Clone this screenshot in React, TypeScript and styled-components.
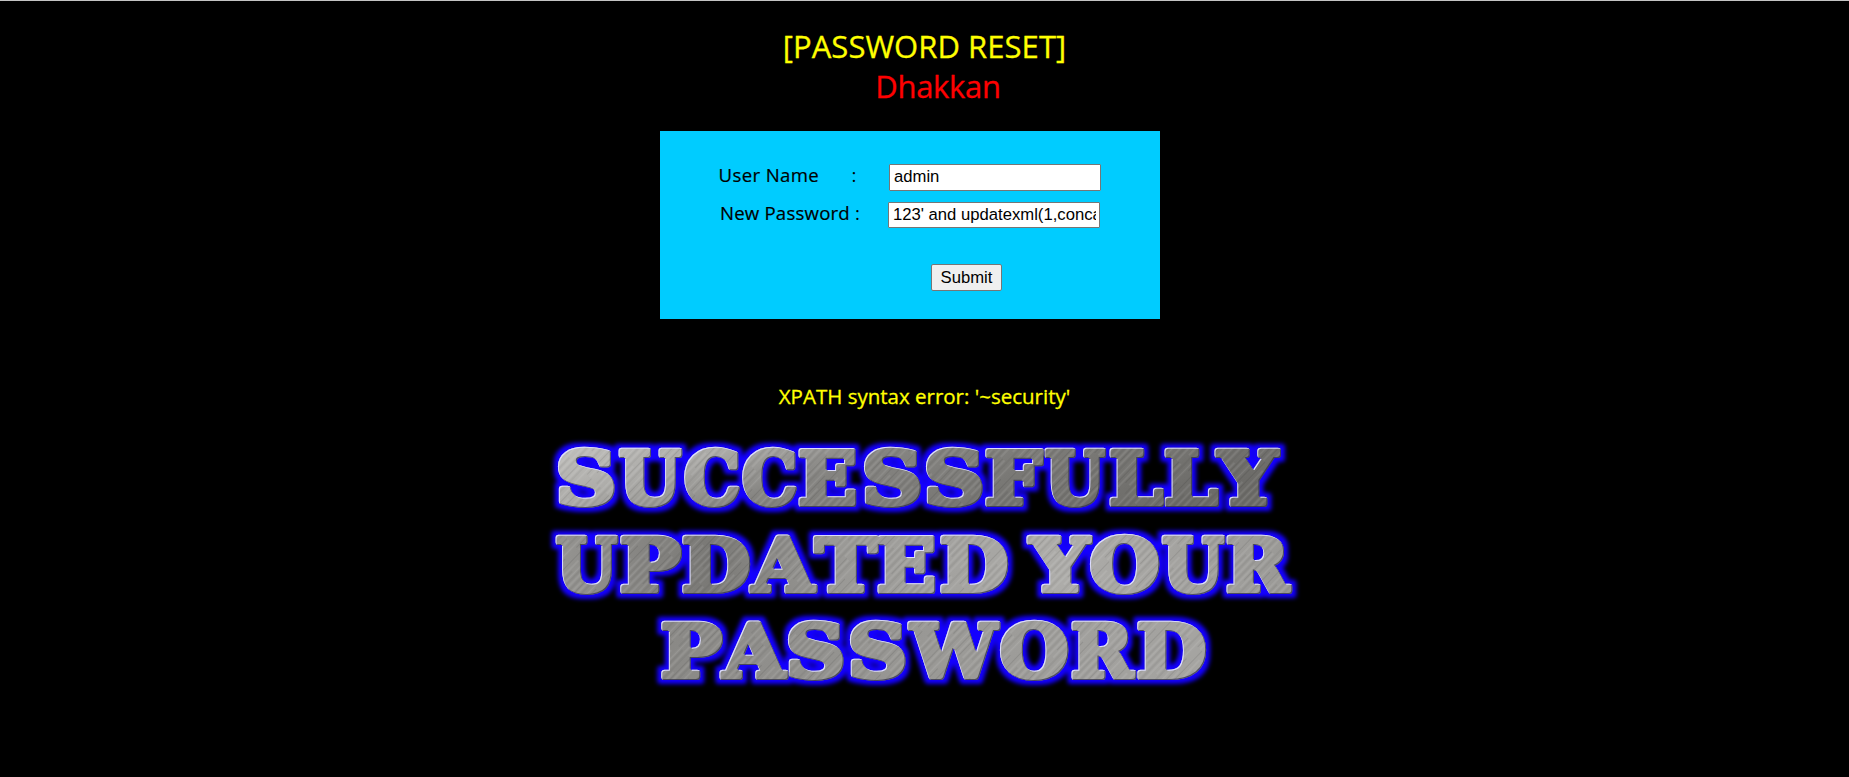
import React, { useMemo } from "react";
import styled, { createGlobalStyle } from "styled-components";

const GlobalStyle = createGlobalStyle`
  * { box-sizing: border-box; }
  body { margin: 0; background: #000; overflow: hidden; }
`;

const Page = styled.main`
  display: flex;
  flex-direction: column;
  align-items: center;
  width: 100%;
  height: 777px;
  padding-top: 25px;
  border-top: 1px solid #c4c4c4;
  background: #000;
  font-family: "Open Sans", "Noto Sans", sans-serif;
`;

const Line = styled.div<{ $size: number; $color: string; $spacing?: number; $indent?: number }>`
  height: 40px;
  line-height: 40px;
  white-space: nowrap;
  font-size: ${(p) => p.$size}px;
  color: ${(p) => p.$color};
  letter-spacing: ${(p) => p.$spacing ?? 0}px;
  margin-left: ${(p) => p.$indent ?? 0}px;
  -webkit-text-stroke: 0.3px ${(p) => p.$color};
`;

const Panel = styled.form`
  display: flex;
  flex-direction: column;
  width: 500px;
  height: 188px;
  margin: 25px 29px 0 0;
  padding: 33px 0 0 58px;
  background: #00ccff;
`;

const Row = styled.label<{ $shift?: number; $gap: number }>`
  display: flex;
  height: 27px;
  margin-bottom: ${(p) => p.$gap}px;
  padding-left: ${(p) => p.$shift ?? 0}px;
  font-size: 18.6px;
  line-height: 22px;
  color: #000;
`;

const Caption = styled.span<{ $width: number; $spacing: number }>`
  width: ${(p) => p.$width}px;
  white-space: nowrap;
  letter-spacing: ${(p) => p.$spacing}px;
  -webkit-text-stroke: 0.2px #000;
`;

const Colon = styled.span<{ $width: number }>`
  width: ${(p) => p.$width}px;
`;

const Field = styled.input<{ $height: number }>`
  width: 212px;
  height: ${(p) => p.$height}px;
  padding: 0 3px 1px 4px;
  border: 1px solid #767676;
  border-radius: 1px;
  background: #fff;
  color: #000;
  font: 16.67px "Liberation Sans", Arial, sans-serif;
  outline: none;
`;

const Submit = styled.button`
  width: 71px;
  height: 27px;
  margin-left: 213px;
  padding: 0;
  border: 1px solid #767676;
  border-radius: 2px;
  background: #efefef;
  color: #000;
  font: 16.67px "Liberation Sans", Arial, sans-serif;
`;

const Message = styled(Line)`
  margin-top: 57px;
`;

const Banner = styled.svg`
  display: block;
  flex: none;
  width: 769px;
  height: 270px;
  margin-top: 13px;
`;

const SIZE = 72;
const STROKE = 5.8;

const Lettering = styled.text`
  font-family: "DejaVu Serif", serif;
  font-weight: 700;
  font-size: ${SIZE}px;
  fill: url(#metal);
  stroke: url(#metal);
  stroke-width: ${STROKE}px;
  stroke-linejoin: round;
`;

type Span = [number, number];

// Left and right edge of every letter, one pair per character.
const lines: { text: string; y: number; edges: Span[] }[] = [
  {
    text: "SUCCESSFULLY",
    y: 75,
    edges: [[17, 75], [78, 143], [144, 200], [202, 257], [258, 317], [323, 381], [385, 443], [445, 505], [504, 567], [569, 625], [624, 680], [674, 742]],
  },
  {
    text: "UPDATED YOUR",
    y: 161.8,
    edges: [[15, 79], [80, 143], [142, 211], [208, 278], [272, 339], [337, 396], [400, 469], [469, 486], [486, 554], [550, 620], [621, 686], [686, 753]],
  },
  {
    text: "PASSWORD",
    y: 248,
    edges: [[121, 184], [179, 249], [247, 304], [309, 366], [367, 461], [460, 529], [531, 597], [597, 667]],
  },
];

// Stretches each glyph so that its inked part fills the span given for it.
function fitGlyphs() {
  const ctx = document.createElement("canvas").getContext("2d")!;
  ctx.font = `700 ${SIZE}px "DejaVu Serif", serif`;
  return lines.map((line) => ({
    ...line,
    glyphs: [...line.text].map((char, i) => {
      const [left, right] = line.edges[i];
      if (char === " ") return { char: "\u00a0", x: left, length: right - left };
      const m = ctx.measureText(char);
      const ink = m.actualBoundingBoxLeft + m.actualBoundingBoxRight + STROKE;
      const scale = (right - left) / ink;
      return {
        char,
        x: left + scale * (m.actualBoundingBoxLeft + STROKE / 2),
        length: m.width * scale,
      };
    }),
  }));
}

function SuccessBanner() {
  const fitted = useMemo(fitGlyphs, []);
  return (
    <Banner viewBox="0 0 769 270">
      <defs>
        <linearGradient id="sheen" x1="0" y1="0" x2="1" y2="0.35">
          <stop offset="0" stopColor="#c8c7c4" />
          <stop offset="0.28" stopColor="#acaba8" />
          <stop offset="0.48" stopColor="#858481" />
          <stop offset="0.75" stopColor="#777673" />
          <stop offset="1" stopColor="#6c6b68" />
        </linearGradient>
        <linearGradient id="sheen2" x1="0" x2="1" y1="0" y2="0">
          <stop offset="0" stopColor="#989794" />
          <stop offset="0.22" stopColor="#7a7976" />
          <stop offset="0.38" stopColor="#999895" />
          <stop offset="0.68" stopColor="#adaca9" />
          <stop offset="1" stopColor="#989794" />
        </linearGradient>
        <linearGradient id="sheen3" x1="0" x2="1" y1="0" y2="0">
          <stop offset="0.15" stopColor="#898885" />
          <stop offset="0.55" stopColor="#9b9a97" />
          <stop offset="0.85" stopColor="#a5a4a1" />
        </linearGradient>
        <pattern id="brush" width="60" height="43" patternUnits="userSpaceOnUse" patternTransform="rotate(-46)">
          <path d="M0 1H60M0 7H38M12 12H60M0 19.5H60M0 26H30M9 33H52M0 38.5H60" stroke="#fff" strokeOpacity=".1" strokeWidth="1.3" />
          <path d="M0 4H60M20 9.5H60M0 15H60M0 22.5H44M8 28.5H60M0 36H40M14 41H60" stroke="#000" strokeOpacity=".09" strokeWidth="1.2" />
        </pattern>
        <pattern id="metal" width="769" height="270" patternUnits="userSpaceOnUse">
          <rect width="769" height="92" fill="url(#sheen)" />
          <rect y="91" width="769" height="87" fill="url(#sheen2)" />
          <rect y="177" width="769" height="93" fill="url(#sheen3)" />
          <rect width="769" height="270" fill="url(#brush)" />
        </pattern>
        <filter id="bevel" x="0" y="0" width="769" height="270" filterUnits="userSpaceOnUse" colorInterpolationFilters="sRGB">
          <feMorphology in="SourceAlpha" operator="dilate" radius="4" result="wide" />
          <feGaussianBlur in="wide" stdDeviation="2" result="halo" />
          <feFlood floodColor="#1400ff" />
          <feComposite in2="halo" operator="in" result="glow" />
          <feOffset in="SourceAlpha" dx="1" dy="1" result="se" />
          <feOffset in="SourceAlpha" dx="-1" dy="-1" result="nw" />
          <feFlood floodColor="#dcdcff" />
          <feComposite in2="SourceAlpha" operator="in" />
          <feComposite in2="se" operator="out" result="light" />
          <feFlood floodColor="#30304c" floodOpacity=".75" />
          <feComposite in2="SourceAlpha" operator="in" />
          <feComposite in2="nw" operator="out" result="dark" />
          <feMerge>
            <feMergeNode in="glow" />
            <feMergeNode in="SourceGraphic" />
            <feMergeNode in="dark" />
            <feMergeNode in="light" />
          </feMerge>
        </filter>
      </defs>
      <g filter="url(#bevel)">
        {fitted.map((line) => (
          <Lettering key={line.text} y={line.y}>
            {line.glyphs.map((g, i) => (
              <tspan key={i} x={g.x} textLength={g.length} lengthAdjust="spacingAndGlyphs">
                {g.char}
              </tspan>
            ))}
          </Lettering>
        ))}
      </g>
    </Banner>
  );
}

export default function App() {
  return (
    <>
      <GlobalStyle />
      <Page>
        <Line $size={31} $color="#ff0" $spacing={0.05}>[PASSWORD RESET]</Line>
        <Line $size={31} $color="#f00" $indent={27} $spacing={-0.3}>Dhakkan</Line>
        <Panel onSubmit={(e) => e.preventDefault()}>
          <Row $gap={11} $shift={0.6}>
            <Caption $width={133} $spacing={0.35}>User Name</Caption>
            <Colon $width={37.4}>:</Colon>
            <Field $height={27} defaultValue="admin" />
          </Row>
          <Row $gap={35} $shift={2}>
            <Caption $width={135} $spacing={0.2}>New Password</Caption>
            <Colon $width={33}>:</Colon>
            <Field $height={26} defaultValue="123' and updatexml(1,concat(0x7e,database()),1)#" />
          </Row>
          <Submit type="submit">Submit</Submit>
        </Panel>
        <Message $size={20.5} $color="#ff0">XPATH syntax error: '~security'</Message>
        <SuccessBanner />
      </Page>
    </>
  );
}
